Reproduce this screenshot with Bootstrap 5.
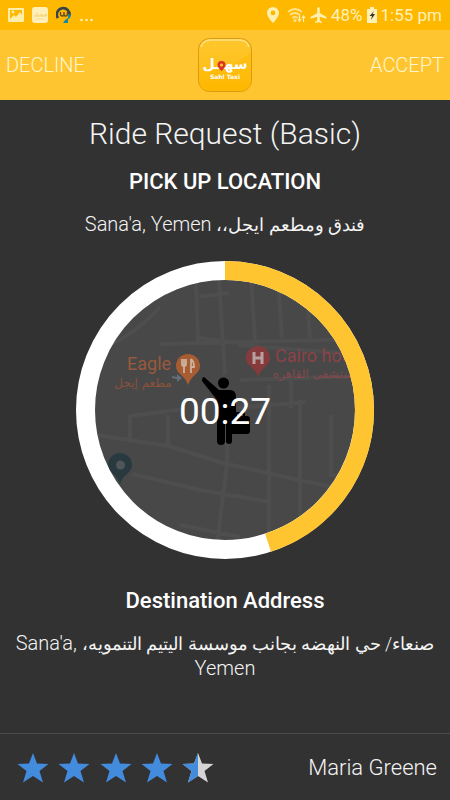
<!DOCTYPE html>
<html lang="en">
<head>
<meta charset="utf-8">
<meta name="viewport" content="width=device-width, initial-scale=1">
<title>Ride Request</title>
<link href="https://cdn.jsdelivr.net/npm/bootstrap@5.3.0/dist/css/bootstrap.min.css" rel="stylesheet">
<style>
body { font-family: Roboto, "DejaVu Sans", sans-serif; background: #323232; color: #f4f4f4; font-weight: 300; }
.status-bar { background: #ffb800; height: 30px; color: #fff1b8; font-size: 17px; line-height: 30px; font-weight: 400; }
.action-bar { background: #ffc530; height: 70px; }
.action-btn { color: #fff5cf; font-size: 20px; font-weight: 300; line-height: 30px; padding: 8px 6px; }
.action-btn:hover { color: #fff; }
.ride-title { font-size: 30px; line-height: 36px; font-weight: 300; }
.section-title { font-size: 22px; line-height: 28px; font-weight: 500; color: #fff; }
.address { font-size: 20px; line-height: 24px; }
.address span { font-size: 18px; }
.timer { width: 298px; }
.timer-text { font-size: 37px; line-height: 44px; font-weight: 400; color: #fff; }
.map-label { font-weight: 400; font-size: 18px; }
.bottom-bar { border-top: 1px solid #4b4b4b; height: 67px; padding: 2px 13px 0 16px; }
.rider { font-size: 22px; line-height: 28px; }
</style>
<script src="https://cdn.jsdelivr.net/npm/bootstrap@5.3.0/dist/js/bootstrap.bundle.min.js"></script>
</head>
<body>
<div class="d-flex flex-column min-vh-100">
  <div class="status-bar d-flex justify-content-between align-items-center px-2">
    <div class="d-flex align-items-center gap-2">
      <svg width="16" height="14" viewBox="0 0 16 14" role="img" aria-label="Picture"><path fill="#ffedaa" fill-rule="evenodd" d="M1 0h14a1 1 0 0 1 1 1v12a1 1 0 0 1-1 1H1a1 1 0 0 1-1-1V1a1 1 0 0 1 1-1zm1 2v9l4-4 2 2 4-5 2 3V2zm3 .5a1.500 1.500 0 1 0 .01 0z"/></svg>
      <svg width="16" height="16" viewBox="0 0 16 16" role="img" aria-label="Sahl Taxi"><rect width="16" height="16" rx="3" fill="#fff0ba"/><path d="M2 9h3V6M5 9h6q-1-3-3-1M11 9h2V7m0 2h1.500V7" stroke="#f2cf72" fill="none"/><path d="M4 12h8" stroke="#f8dc90"/></svg>
      <svg width="16" height="18" viewBox="0 0 16 18" role="img" aria-label="Assistant"><path d="M2 12A6.300 6.300 0 1 1 13.300 10" fill="none" stroke="#35444b" stroke-width="2.600"/><path d="M12 8l3 1-1 3-2 1v4H7l2-3 3-2z" fill="#168aa4"/><path d="M4.500 6v2q0 2 1.700 2T8 8V6v2q0 2 1.700 2t1.700-2V6" fill="none" stroke="#6b4c26" stroke-width="1.400"/></svg>
      <svg width="14" height="16" viewBox="0 0 14 16" aria-hidden="true"><g fill="#fff0b0"><circle cx="1.500" cy="13" r="1.300"/><circle cx="6.500" cy="13" r="1.300"/><circle cx="11.500" cy="13" r="1.300"/></g></svg>
    </div>
    <div class="d-flex align-items-center gap-1">
      <svg class="me-1" width="12" height="16" viewBox="0 0 12 16" role="img" aria-label="Location"><path fill="#fff0b0" fill-rule="evenodd" d="M6 0a6 6 0 0 0-6 6c0 4 6 10 6 10s6-6 6-10a6 6 0 0 0-6-6zm0 3.500a2.400 2.400 0 1 1 0 4.800 2.400 2.400 0 0 1 0-4.800z"/></svg>
      <svg width="19" height="16" viewBox="0 0 19 16" role="img" aria-label="Wi-Fi"><g fill="none" stroke="#ffe28a" stroke-width="1.700"><path d="M1 5q7-6 14 0M3 8q5-4 10 0M5.500 11q2.500-2 5 0"/></g><circle cx="8" cy="13.500" r="1.500" fill="#ffe28a"/><path d="M12.500 8v6m-1.500-2l1.500 2.200L14 12M16.500 15V9M15 11l1.500-2.200L18 11" fill="none" stroke="#fff0b0" stroke-width="1.200"/></svg>
      <svg width="17" height="16" viewBox="0 0 17 16" role="img" aria-label="Airplane mode"><path fill="#fff0b0" d="M7.200 1.500a1.300 1.300 0 0 1 2.600 0V6l6.700 4v1.800l-6.700-2v3.700l2 1.300V16l-3.300-.8L5.200 16v-1.200l2-1.300V9.800l-6.700 2V10l6.700-4z"/></svg>
      <span>48%</span>
      <svg width="10" height="16" viewBox="0 0 10 16" role="img" aria-label="Charging"><path fill="#fff0b8" d="M3 0h4v2h3v14H0V2h3z"/><path d="M7 4L2.500 9H5l-1 4 4-6H5.500z" fill="#3e351c"/></svg>
      <span>1:55 pm</span>
    </div>
  </div>
  <header class="action-bar d-flex justify-content-between align-items-center">
    <button type="button" class="btn action-btn border-0 text-start col-4">DECLINE</button>
    <svg width="56" height="56" viewBox="0 0 56 56" role="img" aria-label="Sahl Taxi">
      <defs><linearGradient id="logoFill" x2="0" y2="1"><stop stop-color="#ffc72d"/><stop offset=".55" stop-color="#fdc11c"/><stop offset="1" stop-color="#ffb800"/></linearGradient></defs>
      <rect x="1.500" y="1.500" width="53" height="53" rx="11" fill="url(#logoFill)" stroke="#d99b12"/>
      <path d="M4 10q2-7 10-7h28q8 0 10 7" fill="none" stroke="#ffe080" stroke-width="1.500"/>
      <path d="M2 33q26 5 52-18v29q0 10-10 10H12Q2 54 2 44z" fill="#ffb800" opacity=".45"/>
      <text x="28" y="32" text-anchor="middle" direction="rtl" font-family="DejaVu Sans" font-size="14" font-weight="700" fill="#fff">سهــل</text>
      <path d="M24.500 24a4 4 0 0 1 4 4c0 2.500-4 6-4 6s-4-3.500-4-6a4 4 0 0 1 4-4z" fill="#d93520"/><circle cx="24.500" cy="28" r="1.600" fill="#ffc530"/>
      <text x="28" y="42" text-anchor="middle" font-family="DejaVu Sans" font-size="6" font-weight="700" fill="#fff">Sahl Taxi</text>
    </svg>
    <button type="button" class="btn action-btn border-0 text-end col-4">ACCEPT</button>
  </header>
  <main class="text-center px-2 pt-3 flex-grow-1">
    <h1 class="ride-title mb-3">Ride Request (Basic)</h1>
    <h2 class="section-title mb-3">PICK UP LOCATION</h2>
    <p class="address mb-4" dir="rtl"><span lang="ar">فندق ومطعم ايجل،،</span> Sana'a, Yemen</p>
    <div class="timer position-relative mx-auto">
      <svg class="d-block w-100" viewBox="76 261 298 298" role="img" aria-label="Pick up map with countdown">
        <defs><clipPath id="mapClip"><circle cx="225" cy="410" r="131"/></clipPath><filter id="soft"><feGaussianBlur stdDeviation=".7"/></filter></defs>
        <g clip-path="url(#mapClip)">
          <rect x="76" y="261" width="298" height="298" fill="#484848"/>
          <g fill="none" stroke="#4e4e4e" stroke-width="4">
            <path d="M196 282l2 61M219 280l6 95M251 276l4 65M278 280l4 58M307 292l3 46M160 344l210-5M199 297l30-4M199 338l35 5M95 350q35-10 65-43M238 345l132 10M240 380l120-4M291 380v28M236 408l70-6"/>
            <path d="M130 415v24M90 434l78 12 55 17 80 18 30 6M168 415v32M130 416l55-7M132 474l68 16 70 12M227 405v60l-10 80M269 385v150M300 400v130M331 415v60l30 5M180 525l60 12"/>
          </g>
          <text class="map-label" x="127" y="370" fill="#99593c">Eagle</text>
          <text x="143" y="387" text-anchor="middle" direction="rtl" font-family="DejaVu Sans" font-size="12" font-weight="400" fill="#8b513a">مطعم إيجل</text>
          <path d="M172 376l5 1v-3l5 4-5 4v-3l-5-1z" fill="#666e79"/>
          <path d="M188 354a12 12 0 0 1 12 12c0 8-9 9-12 19-3-10-12-11-12-19a12 12 0 0 1 12-12z" fill="#a85c32"/>
          <path d="M182 359v5q0 2 2 2v7m0-14v7m0 0q2 0 2-2v-5M191 359v14m0-14q3 2 3 8h-3" fill="none" stroke="#cbb29e" stroke-width="1.800"/>
          <path d="M258 346a12 12 0 0 1 12 12c0 8-9 9-12 19-3-10-12-11-12-19a12 12 0 0 1 12-12z" fill="#853b3c"/>
          <path d="M254 352v12m8-12v12m-8-6h8" stroke="#b8a0a0" stroke-width="3"/>
          <text class="map-label" x="275" y="362" fill="#8c4347">Cairo hos</text>
          <text x="353" y="378" direction="rtl" font-family="DejaVu Sans" font-size="12" font-weight="400" fill="#84484c">ستشفى القاهره</text>
          <path d="M120 453a12 12 0 0 1 12 12c0 8-9 9-12 19-3-10-12-11-12-19a12 12 0 0 1 12-12z" fill="#293940"/><circle cx="120.500" cy="465" r="4.500" fill="#4f5659"/>
          <g filter="url(#soft)">
            <circle cx="223.500" cy="383" r="5.500"/>
            <path d="M204 377l15 13h11q6 0 6 7v19h-4v25q0 3-3 3t-3-3v-19h-1v19q0 4-4 4t-4-4v-41l-15-19q0-4 2-4z"/>
            <path fill-rule="evenodd" d="M231 416h4v-2q0-2 2-2h6q2 0 2 2v2h2q3 0 3 3v12q0 3-3 3h-16zm6 0h6v-2h-6z"/>
          </g>
        </g>
        <circle cx="225" cy="410" r="139.500" fill="none" stroke="#fff" stroke-width="19"/>
        <circle cx="225" cy="410" r="139.500" fill="none" stroke="#ffc530" stroke-width="19" pathLength="60" stroke-dasharray="27 33" transform="rotate(-90 225 410)"/>
      </svg>
      <div class="timer-text position-absolute top-50 start-50 translate-middle pt-1" role="timer">00:27</div>
    </div>
    <h2 class="section-title mt-4 pt-1 mb-3">Destination Address</h2>
    <p class="address mb-0" dir="rtl"><span lang="ar">صنعاء/ حي النهضه بجانب موسسة اليتيم التنمويه،</span> Sana'a, Yemen</p>
  </main>
  <footer class="bottom-bar d-flex justify-content-between align-items-center">
    <svg width="198" height="32" viewBox="0 0 198 32" role="img" aria-label="Rated 4.5 out of 5">
      <defs><path id="star" d="M17 1l4 10.500 11.500.5-9 7 3.500 11.500-10-6.500-10 6.500L10.500 19l-9-7 11.500-.5z" stroke-linejoin="round"/><clipPath id="half"><rect width="17" height="32"/></clipPath></defs>
      <g fill="#438bdc"><use href="#star"/><use href="#star" x="41"/><use href="#star" x="83"/><use href="#star" x="124"/></g>
      <g transform="translate(165)"><use href="#star" fill="#d5d5d5"/><g clip-path="url(#half)"><use href="#star" fill="#438bdc"/></g></g>
    </svg>
    <div class="rider">Maria Greene</div>
  </footer>
</div>
</body>
</html>
